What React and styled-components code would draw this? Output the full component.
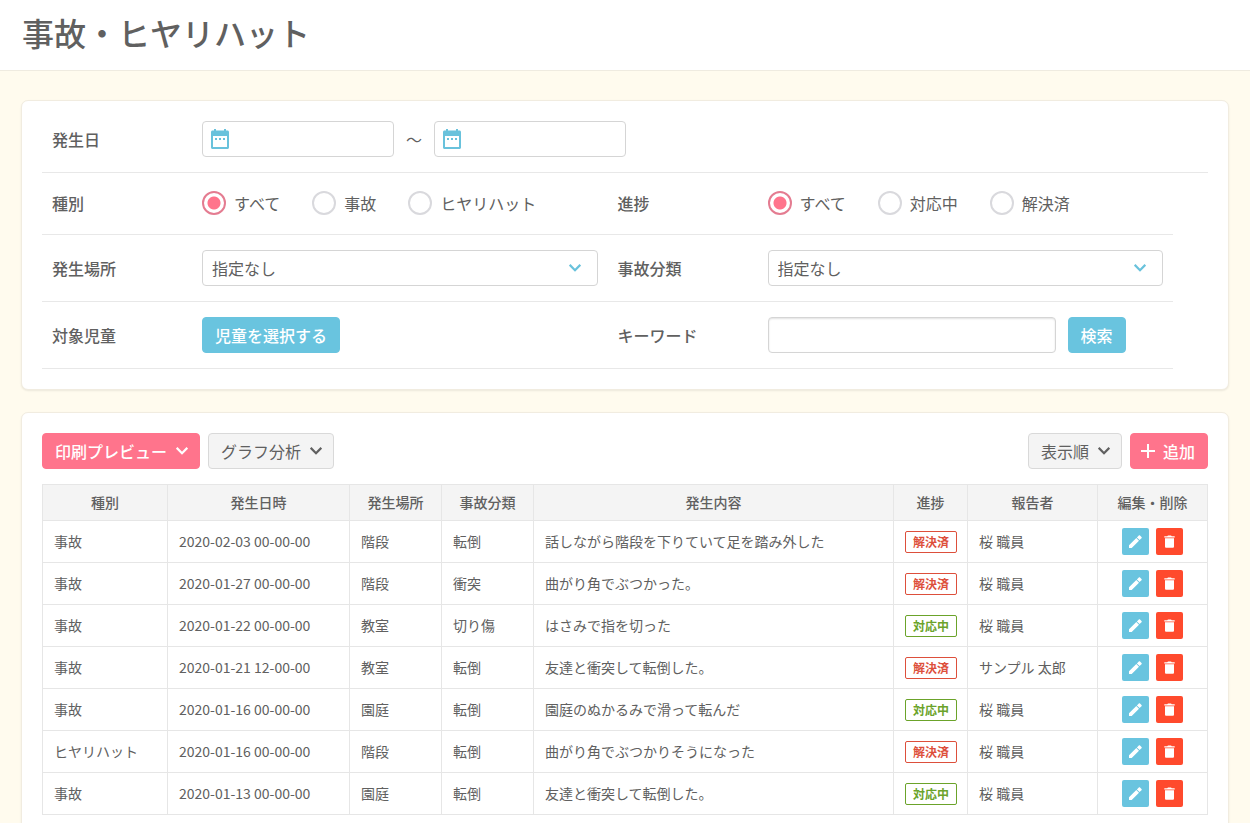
import React, { useState } from "react";
import styled, { createGlobalStyle, css } from "styled-components";

const GlobalStyle = createGlobalStyle`
    *, *::before, *::after {
        box-sizing: border-box;
    }

    body {
        margin: 0;
        background: #fffbee;
        color: #606060;
        font-family: "Noto Sans CJK JP", sans-serif;
        font-size: 16px;
        line-height: 24px;
    }

    button, input, select {
        font: inherit;
        color: inherit;
    }
`;

const PageHeader = styled.header`
    padding: 8px 22px 14px;
    background: #fff;
    border-bottom: 1px solid #efebe0;
`;

const PageTitle = styled.h1`
    margin: 0;
    font-size: 32px;
    font-weight: 500;
    line-height: 48px;
`;

const Main = styled.main`
    display: flex;
    flex-direction: column;
    gap: 22px;
    padding: 29px 21px;
`;

const Card = styled.section`
    padding: ${(props) => (props.$compact ? "5px 20px 20px" : "20px")};
    background: #fff;
    border: 1px solid #f1ece0;
    border-radius: 7px;
    box-shadow: 0 1px 2px rgba(0, 0, 0, 0.08);
`;

const SearchRow = styled.div`
    display: grid;
    grid-template-columns: ${(props) => (props.$wide ? "1fr" : "1fr 1fr")};
    width: ${(props) => (props.$wide ? "100%" : "97%")};
    min-height: 62px;
    border-bottom: 1px solid #e8e8e8;
`;

const Field = styled.div`
    display: flex;
    align-items: center;
    min-width: 0;
    padding: 15px 10px;
`;

const FieldLabel = styled.label`
    flex: 0 0 150px;
    font-weight: 500;
`;

const RadioField = styled(Field)`
    padding: 12px 10px 14px;
`;

const RadioList = styled.div`
    display: flex;
    gap: 32px;
`;

const RadioLabel = styled.label`
    display: flex;
    align-items: center;
    gap: 8px;
    line-height: 22px;
    white-space: nowrap;
    cursor: pointer;
`;

const Radio = styled.input`
    appearance: none;
    width: 24px;
    height: 24px;
    margin: 0;
    border: 2px solid #d9d9dd;
    border-radius: 50%;
    background: #fff;

    &:checked {
        border-color: #e47c91;
        background: radial-gradient(circle, #ff748c 6px, #fff 7px);
    }
`;

const boxed = css`
    height: 36px;
    border: 1px solid #d5d5d5;
    border-radius: 4px;
    background: #fff;
`;

const DateBox = styled.span`
    ${boxed}
    display: flex;
    align-items: center;
    width: 192px;
    padding: 0 5px;
`;

const DateInput = styled.input`
    flex: 1;
    min-width: 0;
    padding: 0 4px;
    border: 0;
    outline: 0;
    background: none;
`;

const Tilde = styled.span`
    margin: 0 12px;
`;

const SelectBox = styled.span`
    display: grid;
    flex: 1;
    align-items: center;

    & > * {
        grid-area: 1 / 1;
    }

    & > svg {
        justify-self: end;
        margin-right: 17px;
        color: #69c2dc;
        pointer-events: none;
    }
`;

const Select = styled.select`
    ${boxed}
    appearance: none;
    width: 100%;
    padding: 0 36px 0 9px;
`;

const KeywordInput = styled.input`
    ${boxed}
    width: 288px;
    margin-right: 12px;
    padding: 0 9px;
    box-shadow: inset 0 1px 2px rgba(0, 0, 0, 0.12);
`;

const buttonColors = {
    primary: css`
        background: #ff748c;
        border-color: #ff748c;
        color: #fff;
        font-weight: 500;
    `,
    info: css`
        background: #69c4df;
        border-color: #69c4df;
        color: #fff;
        font-weight: 500;
    `,
    plain: css`
        background: #f4f4f4;
        border-color: #d9d9d9;
    `
};

const Button = styled.button`
    display: inline-flex;
    align-items: center;
    gap: 8px;
    height: 36px;
    padding: 0 12px;
    border: 1px solid;
    border-radius: 4px;
    white-space: nowrap;
    cursor: pointer;
    ${(props) => buttonColors[props.$color]}
`;

const MenuButton = styled(Button)`
    gap: 9px;
    padding-right: 11px;
`;

const AddButton = styled(Button)`
    padding-left: 10px;
`;

const Toolbar = styled.div`
    display: flex;
    justify-content: space-between;
    margin-bottom: 15px;
`;

const ToolbarGroup = styled.div`
    display: flex;
    gap: 8px;
`;

const Table = styled.table`
    width: 100%;
    table-layout: fixed;
    border-collapse: collapse;
    font-size: 14px;
    line-height: 20px;
`;

const Th = styled.th`
    width: ${(props) => props.$width || "auto"};
    height: 36px;
    padding: 0 0 2px;
    background: #f4f4f4;
    border: 1px solid #e6e6e6;
    font-weight: 500;
`;

const Td = styled.td`
    height: 42px;
    padding: 0 10px 2px 11px;
    border: 1px solid #e6e6e6;
    white-space: nowrap;
`;

const StatusTd = styled(Td)`
    padding-bottom: 0;
`;

const ActionsTd = styled(Td)`
    padding: 0;
`;

const Badge = styled.span`
    display: block;
    height: 22px;
    border: 1px solid;
    border-radius: 2px;
    color: ${(props) => (props.$done ? "#dd4f3b" : "#6ba32a")};
    font-size: 12px;
    font-weight: 700;
    line-height: 20px;
    text-align: center;
`;

const RowActions = styled.div`
    display: flex;
    justify-content: center;
    gap: 7px;
`;

const IconButton = styled.button`
    display: flex;
    align-items: center;
    justify-content: center;
    width: 27px;
    height: 27px;
    padding: 0;
    border: 0;
    border-radius: 2px;
    background: ${(props) => (props.$danger ? "#ff4a2d" : "#69c4df")};
    color: #fff;
    cursor: pointer;
`;

const CalendarIcon = () => (
    <svg width="24" height="24" viewBox="0 0 24 24" aria-hidden="true">
        <path fill="#69c2dc" fillRule="evenodd" d="M4.500 3.500H6V2h2v1.500h8V2h2v1.500h1.500C20.300 3.500 21 4.200 21 5v15.500c0 .8-.7 1.500-1.500 1.500h-15C3.700 22 3 21.300 3 20.500V5C3 4.200 3.700 3.500 4.500 3.500zM5 9v11h14V9z" />
        <path fill="#69c2dc" d="M7 11h2v2H7zM11 11h2v2h-2zM15 11h2v2h-2z" />
    </svg>
);

const ChevronIcon = () => (
    <svg width="12" height="8" viewBox="0 0 12 8" fill="none" stroke="currentColor" strokeWidth="2.2" aria-hidden="true">
        <path d="M.7 .9L6 6.200l5.300-5.300" />
    </svg>
);

const PlusIcon = () => (
    <svg width="14" height="14" viewBox="0 0 14 14" fill="currentColor" aria-hidden="true">
        <path d="M14 8H8v6H6V8H0V6h6V0h2v6h6z" />
    </svg>
);

const PencilIcon = () => (
    <svg width="13" height="13" viewBox="0 0 13 13" fill="currentColor" aria-hidden="true">
        <path d="M0 10.300V13h2.700l7.300-7.300L7.300 3zM10.600 5.100l1.900-1.900c.4-.4.4-.8 0-1.200L11 .5c-.4-.4-.8-.4-1.200 0L7.900 2.400z" />
    </svg>
);

const TrashIcon = () => (
    <svg width="11" height="13" viewBox="0 0 11 13" fill="currentColor" aria-hidden="true">
        <path d="M1 3.300h9v8.200c0 .8-.5 1.300-1.300 1.300H2.300C1.500 12.800 1 12.300 1 11.500zM.3 1.200h2.900L4 .4h3l.8.8h2.900v1.200H.3z" />
    </svg>
);

const columns = [
    { title: "種別", width: "125px" },
    { title: "発生日時", width: "182px" },
    { title: "発生場所", width: "92px" },
    { title: "事故分類", width: "92px" },
    { title: "発生内容" },
    { title: "進捗", width: "74px" },
    { title: "報告者", width: "130px" },
    { title: "編集・削除", width: "110px" }
];

const reports = [
    { id: 7, type: "事故", date: "2020-02-03 00-00-00", place: "階段", category: "転倒", detail: "話しながら階段を下りていて足を踏み外した", status: "解決済", reporter: "桜 職員" },
    { id: 6, type: "事故", date: "2020-01-27 00-00-00", place: "階段", category: "衝突", detail: "曲がり角でぶつかった。", status: "解決済", reporter: "桜 職員" },
    { id: 5, type: "事故", date: "2020-01-22 00-00-00", place: "教室", category: "切り傷", detail: "はさみで指を切った", status: "対応中", reporter: "桜 職員" },
    { id: 4, type: "事故", date: "2020-01-21 12-00-00", place: "教室", category: "転倒", detail: "友達と衝突して転倒した。", status: "解決済", reporter: "サンプル 太郎" },
    { id: 3, type: "事故", date: "2020-01-16 00-00-00", place: "園庭", category: "転倒", detail: "園庭のぬかるみで滑って転んだ", status: "対応中", reporter: "桜 職員" },
    { id: 2, type: "ヒヤリハット", date: "2020-01-16 00-00-00", place: "階段", category: "転倒", detail: "曲がり角でぶつかりそうになった", status: "解決済", reporter: "桜 職員" },
    { id: 1, type: "事故", date: "2020-01-13 00-00-00", place: "園庭", category: "転倒", detail: "友達と衝突して転倒した。", status: "対応中", reporter: "桜 職員" }
];

function RadioGroup({ name, label, options }) {
    const [selected, setSelected] = useState(options[0]);

    return (
        <RadioField role="radiogroup" aria-labelledby={name + "-label"}>
            <FieldLabel as="span" id={name + "-label"}>{label}</FieldLabel>
            <RadioList>
                {options.map((option) => (
                    <RadioLabel key={option}>
                        <Radio
                            type="radio"
                            name={name}
                            checked={selected === option}
                            onChange={() => setSelected(option)}
                        />
                        {option}
                    </RadioLabel>
                ))}
            </RadioList>
        </RadioField>
    );
}

function SelectField({ id, label }) {
    return (
        <Field>
            <FieldLabel htmlFor={id}>{label}</FieldLabel>
            <SelectBox>
                <Select id={id}>
                    <option>指定なし</option>
                </Select>
                <ChevronIcon />
            </SelectBox>
        </Field>
    );
}

function SearchForm() {
    return (
        <Card $compact>
            <SearchRow $wide>
                <Field>
                    <FieldLabel id="date-label" htmlFor="dateFrom">発生日</FieldLabel>
                    <DateBox>
                        <CalendarIcon />
                        <DateInput id="dateFrom" type="text" />
                    </DateBox>
                    <Tilde>～</Tilde>
                    <DateBox>
                        <CalendarIcon />
                        <DateInput type="text" aria-labelledby="date-label" />
                    </DateBox>
                </Field>
            </SearchRow>
            <SearchRow>
                <RadioGroup name="type" label="種別" options={["すべて", "事故", "ヒヤリハット"]} />
                <RadioGroup name="status" label="進捗" options={["すべて", "対応中", "解決済"]} />
            </SearchRow>
            <SearchRow>
                <SelectField id="place" label="発生場所" />
                <SelectField id="category" label="事故分類" />
            </SearchRow>
            <SearchRow>
                <Field>
                    <FieldLabel htmlFor="child">対象児童</FieldLabel>
                    <Button id="child" type="button" $color="info">児童を選択する</Button>
                </Field>
                <Field>
                    <FieldLabel htmlFor="keyword">キーワード</FieldLabel>
                    <KeywordInput id="keyword" type="text" />
                    <Button type="button" $color="info">検索</Button>
                </Field>
            </SearchRow>
        </Card>
    );
}

function ReportTable() {
    return (
        <Table>
            <thead>
                <tr>
                    {columns.map((column) => (
                        <Th key={column.title} $width={column.width}>{column.title}</Th>
                    ))}
                </tr>
            </thead>
            <tbody>
                {reports.map((report) => (
                    <tr key={report.id}>
                        <Td>{report.type}</Td>
                        <Td>{report.date}</Td>
                        <Td>{report.place}</Td>
                        <Td>{report.category}</Td>
                        <Td>{report.detail}</Td>
                        <StatusTd><Badge $done={report.status === "解決済"}>{report.status}</Badge></StatusTd>
                        <Td>{report.reporter}</Td>
                        <ActionsTd>
                            <RowActions>
                                <IconButton type="button" aria-label="編集"><PencilIcon /></IconButton>
                                <IconButton type="button" aria-label="削除" $danger><TrashIcon /></IconButton>
                            </RowActions>
                        </ActionsTd>
                    </tr>
                ))}
            </tbody>
        </Table>
    );
}

function App() {
    return (
        <>
            <GlobalStyle />
            <PageHeader>
                <PageTitle>事故・ヒヤリハット</PageTitle>
            </PageHeader>
            <Main>
                <SearchForm />
                <Card>
                    <Toolbar>
                        <ToolbarGroup>
                            <MenuButton type="button" $color="primary">印刷プレビュー<ChevronIcon /></MenuButton>
                            <MenuButton type="button" $color="plain">グラフ分析<ChevronIcon /></MenuButton>
                        </ToolbarGroup>
                        <ToolbarGroup>
                            <MenuButton type="button" $color="plain">表示順<ChevronIcon /></MenuButton>
                            <AddButton type="button" $color="primary"><PlusIcon />追加</AddButton>
                        </ToolbarGroup>
                    </Toolbar>
                    <ReportTable />
                </Card>
            </Main>
        </>
    );
}

export default App;
